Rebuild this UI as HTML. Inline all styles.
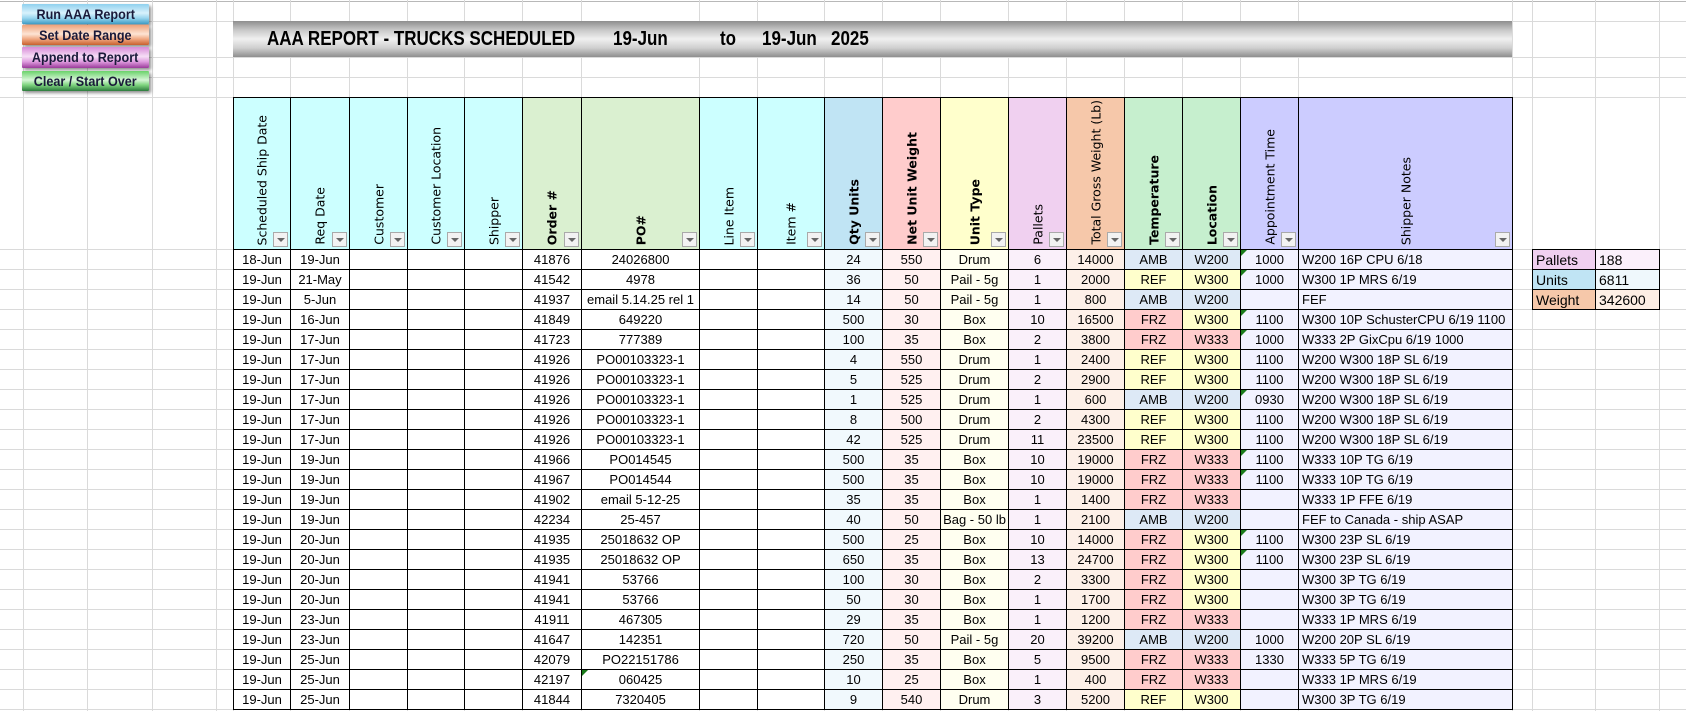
<!DOCTYPE html>
<html><head><meta charset="utf-8"><style>
*{box-sizing:border-box;margin:0;padding:0}
body{width:1686px;height:711px;overflow:hidden;background:#fff;position:relative;font-family:"Liberation Sans",Calibri,sans-serif}
.vl{position:absolute;top:0;width:1px;height:711px;background:#dadada}
.hl{position:absolute;left:0;height:1px;width:1686px;background:#dadada}
.rows{position:absolute;left:0;top:249px;width:1686px;height:462px;background:repeating-linear-gradient(to bottom,#dadada 0,#dadada 1px,transparent 1px,transparent 20px)}
.btn{position:absolute;left:22px;width:127px;font-weight:bold;font-size:14px;color:#1a1a3a;text-align:center;box-shadow:2px 2px 3px rgba(0,0,0,.45);border-radius:1px;overflow:hidden}
.btn b{display:inline-block;transform:scaleX(.9);white-space:nowrap}
.banner{position:absolute;left:233px;top:21px;width:1279px;height:36px;background:linear-gradient(#8e8e8e,#c8c8c8 25%,#f0f0f0 50%,#cfcfcf 75%,#8e8e8e)}
.banner span{position:absolute;top:7px;font-weight:bold;font-size:20px;color:#000;white-space:nowrap;transform:scaleX(.85);transform-origin:left center}
table.m{position:absolute;left:233px;top:97px;width:1279px;border-collapse:collapse;table-layout:fixed;font-size:13px}
td,th{border:1px solid #000;height:20px;text-align:center;white-space:nowrap;overflow:hidden;padding:0 2px;position:relative;font-weight:normal}
th{height:152px;background:#ccffff;font-family:"DejaVu Sans",sans-serif;font-size:12.5px}
th div{position:absolute;bottom:4px;left:50%;writing-mode:vertical-rl;transform:translateX(-50%) rotate(180deg);white-space:nowrap}
th.b div{font-weight:bold}
th i{position:absolute;right:2px;bottom:2px;width:15px;height:15px;border:1px solid #aaa;background:#f2f2f2}
th i:after{content:"";position:absolute;left:3px;top:5px;border-left:4px solid transparent;border-right:4px solid transparent;border-top:4px solid #666}
.gr{background:#daf0d0}.qh{background:#c0e4f4}.nh{background:#ffcccc}.uh{background:#ffffcc}.ph{background:#f0d0f0}.gh{background:#f6c8aa}.th{background:#c6efce}.ah{background:#ccccff}
.q{background:#f1f9fd}.n{background:#fff0f0}.u{background:#fffff0}.p{background:#faf0fa}.g{background:#fdf0e8}.a{background:#f2f2ff}.s{background:#f2f2ff;text-align:left;padding-left:3px}
.A{background:#dde9f6}.R{background:#ffffcc}.F{background:#ffcccc}
.t:before{content:"";position:absolute;left:0;top:0;border-top:6px solid #1a7a1a;border-right:6px solid transparent}
.sum{position:absolute;left:1532px;top:249px;width:127px;border-collapse:collapse;table-layout:fixed;font-size:14px}
.sum td{text-align:left;padding-left:3px;height:20px}
</style></head><body>
<div class="rows"></div>
<div class="hl" style="top:1px;background:#b8b8b8"></div>
<div class="hl" style="top:21px"></div><div class="hl" style="top:57px"></div><div class="hl" style="top:77px"></div><div class="hl" style="top:97px"></div>
<div class="vl" style="left:23px"></div><div class="vl" style="left:87px"></div><div class="vl" style="left:152px"></div><div class="vl" style="left:216px"></div><div class="vl" style="left:233px"></div>
<div class="vl" style="left:290px"></div><div class="vl" style="left:349px"></div><div class="vl" style="left:407px"></div><div class="vl" style="left:464px"></div><div class="vl" style="left:522px"></div><div class="vl" style="left:581px"></div><div class="vl" style="left:699px"></div><div class="vl" style="left:757px"></div><div class="vl" style="left:824px"></div><div class="vl" style="left:882px"></div><div class="vl" style="left:940px"></div><div class="vl" style="left:1008px"></div><div class="vl" style="left:1066px"></div><div class="vl" style="left:1124px"></div><div class="vl" style="left:1182px"></div><div class="vl" style="left:1240px"></div><div class="vl" style="left:1298px"></div>
<div class="vl" style="left:1512px"></div><div class="vl" style="left:1532px"></div><div class="vl" style="left:1595px"></div><div class="vl" style="left:1659px"></div>

<div class="btn" style="top:4px;height:20px;line-height:20px;background:linear-gradient(#8fd0ee,#d8f2fc 45%,#9ad6ef 70%,#3f9cc4)"><b>Run AAA Report</b></div>
<div class="btn" style="top:25px;height:20px;line-height:20px;background:linear-gradient(#eea27a,#fde4d4 45%,#f0a882 70%,#c8602e)"><b>Set Date Range</b></div>
<div class="btn" style="top:47px;height:21px;line-height:21px;background:linear-gradient(#d88ad8,#f6def6 45%,#df9cdf 70%,#9a3a9a)"><b>Append to Report</b></div>
<div class="btn" style="top:71px;height:20px;line-height:20px;background:linear-gradient(#6ad26a,#d6f6d6 45%,#7ed47e 70%,#2c7a3c)"><b>Clear / Start Over</b></div>

<div class="banner">
<span style="left:34px">AAA REPORT - TRUCKS SCHEDULED</span>
<span style="left:380px">19-Jun</span>
<span style="left:487px">to</span>
<span style="left:529px">19-Jun</span>
<span style="left:598px">2025</span>
</div>

<table class="m">
<colgroup><col style="width:57px"><col style="width:59px"><col style="width:58px"><col style="width:57px"><col style="width:58px"><col style="width:59px"><col style="width:118px"><col style="width:58px"><col style="width:67px"><col style="width:58px"><col style="width:58px"><col style="width:68px"><col style="width:58px"><col style="width:58px"><col style="width:58px"><col style="width:58px"><col style="width:58px"><col style="width:214px"></colgroup>
<tr>
<th><div>Scheduled Ship Date</div><i></i></th>
<th><div>Req Date</div><i></i></th>
<th><div>Customer</div><i></i></th>
<th><div>Customer Location</div><i></i></th>
<th><div>Shipper</div><i></i></th>
<th class="b gr"><div>Order #</div><i></i></th>
<th class="b gr"><div>PO#</div><i></i></th>
<th><div>Line Item</div><i></i></th>
<th><div>Item #</div><i></i></th>
<th class="b qh"><div>Qty Units</div><i></i></th>
<th class="b nh"><div>Net Unit Weight</div><i></i></th>
<th class="b uh"><div>Unit Type</div><i></i></th>
<th class="ph"><div>Pallets</div><i></i></th>
<th class="gh"><div>Total Gross Weight (Lb)</div><i></i></th>
<th class="b th"><div>Temperature</div><i></i></th>
<th class="b th"><div>Location</div><i></i></th>
<th class="ah"><div>Appointment Time</div><i></i></th>
<th class="ah"><div>Shipper Notes</div><i></i></th>
</tr>
<tr><td>18-Jun</td><td>19-Jun</td><td></td><td></td><td></td><td>41876</td><td>24026800</td><td></td><td></td><td class="q">24</td><td class="n">550</td><td class="u">Drum</td><td class="p">6</td><td class="g">14000</td><td class="A">AMB</td><td class="A">W200</td><td class="a t">1000</td><td class="s">W200 16P CPU 6/18</td></tr>
<tr><td>19-Jun</td><td>21-May</td><td></td><td></td><td></td><td>41542</td><td>4978</td><td></td><td></td><td class="q">36</td><td class="n">50</td><td class="u">Pail - 5g</td><td class="p">1</td><td class="g">2000</td><td class="R">REF</td><td class="R">W300</td><td class="a t">1000</td><td class="s">W300 1P MRS 6/19</td></tr>
<tr><td>19-Jun</td><td>5-Jun</td><td></td><td></td><td></td><td>41937</td><td>email 5.14.25 rel 1</td><td></td><td></td><td class="q">14</td><td class="n">50</td><td class="u">Pail - 5g</td><td class="p">1</td><td class="g">800</td><td class="A">AMB</td><td class="A">W200</td><td class="a"></td><td class="s">FEF</td></tr>
<tr><td>19-Jun</td><td>16-Jun</td><td></td><td></td><td></td><td>41849</td><td>649220</td><td></td><td></td><td class="q">500</td><td class="n">30</td><td class="u">Box</td><td class="p">10</td><td class="g">16500</td><td class="F">FRZ</td><td class="R">W300</td><td class="a t">1100</td><td class="s">W300 10P SchusterCPU 6/19 1100</td></tr>
<tr><td>19-Jun</td><td>17-Jun</td><td></td><td></td><td></td><td>41723</td><td>777389</td><td></td><td></td><td class="q">100</td><td class="n">35</td><td class="u">Box</td><td class="p">2</td><td class="g">3800</td><td class="F">FRZ</td><td class="F">W333</td><td class="a t">1000</td><td class="s">W333 2P GixCpu 6/19 1000</td></tr>
<tr><td>19-Jun</td><td>17-Jun</td><td></td><td></td><td></td><td>41926</td><td>PO00103323-1</td><td></td><td></td><td class="q">4</td><td class="n">550</td><td class="u">Drum</td><td class="p">1</td><td class="g">2400</td><td class="R">REF</td><td class="R">W300</td><td class="a">1100</td><td class="s">W200 W300 18P SL 6/19</td></tr>
<tr><td>19-Jun</td><td>17-Jun</td><td></td><td></td><td></td><td>41926</td><td>PO00103323-1</td><td></td><td></td><td class="q">5</td><td class="n">525</td><td class="u">Drum</td><td class="p">2</td><td class="g">2900</td><td class="R">REF</td><td class="R">W300</td><td class="a">1100</td><td class="s">W200 W300 18P SL 6/19</td></tr>
<tr><td>19-Jun</td><td>17-Jun</td><td></td><td></td><td></td><td>41926</td><td>PO00103323-1</td><td></td><td></td><td class="q">1</td><td class="n">525</td><td class="u">Drum</td><td class="p">1</td><td class="g">600</td><td class="A">AMB</td><td class="A">W200</td><td class="a t">0930</td><td class="s">W200 W300 18P SL 6/19</td></tr>
<tr><td>19-Jun</td><td>17-Jun</td><td></td><td></td><td></td><td>41926</td><td>PO00103323-1</td><td></td><td></td><td class="q">8</td><td class="n">500</td><td class="u">Drum</td><td class="p">2</td><td class="g">4300</td><td class="R">REF</td><td class="R">W300</td><td class="a">1100</td><td class="s">W200 W300 18P SL 6/19</td></tr>
<tr><td>19-Jun</td><td>17-Jun</td><td></td><td></td><td></td><td>41926</td><td>PO00103323-1</td><td></td><td></td><td class="q">42</td><td class="n">525</td><td class="u">Drum</td><td class="p">11</td><td class="g">23500</td><td class="R">REF</td><td class="R">W300</td><td class="a">1100</td><td class="s">W200 W300 18P SL 6/19</td></tr>
<tr><td>19-Jun</td><td>19-Jun</td><td></td><td></td><td></td><td>41966</td><td>PO014545</td><td></td><td></td><td class="q">500</td><td class="n">35</td><td class="u">Box</td><td class="p">10</td><td class="g">19000</td><td class="F">FRZ</td><td class="F">W333</td><td class="a t">1100</td><td class="s">W333 10P TG 6/19</td></tr>
<tr><td>19-Jun</td><td>19-Jun</td><td></td><td></td><td></td><td>41967</td><td>PO014544</td><td></td><td></td><td class="q">500</td><td class="n">35</td><td class="u">Box</td><td class="p">10</td><td class="g">19000</td><td class="F">FRZ</td><td class="F">W333</td><td class="a t">1100</td><td class="s">W333 10P TG 6/19</td></tr>
<tr><td>19-Jun</td><td>19-Jun</td><td></td><td></td><td></td><td>41902</td><td>email 5-12-25</td><td></td><td></td><td class="q">35</td><td class="n">35</td><td class="u">Box</td><td class="p">1</td><td class="g">1400</td><td class="F">FRZ</td><td class="F">W333</td><td class="a"></td><td class="s">W333 1P FFE 6/19</td></tr>
<tr><td>19-Jun</td><td>19-Jun</td><td></td><td></td><td></td><td>42234</td><td>25-457</td><td></td><td></td><td class="q">40</td><td class="n">50</td><td class="u">Bag - 50 lb</td><td class="p">1</td><td class="g">2100</td><td class="A">AMB</td><td class="A">W200</td><td class="a"></td><td class="s">FEF to Canada - ship ASAP</td></tr>
<tr><td>19-Jun</td><td>20-Jun</td><td></td><td></td><td></td><td>41935</td><td>25018632 OP</td><td></td><td></td><td class="q">500</td><td class="n">25</td><td class="u">Box</td><td class="p">10</td><td class="g">14000</td><td class="F">FRZ</td><td class="R">W300</td><td class="a t">1100</td><td class="s">W300 23P SL 6/19</td></tr>
<tr><td>19-Jun</td><td>20-Jun</td><td></td><td></td><td></td><td>41935</td><td>25018632 OP</td><td></td><td></td><td class="q">650</td><td class="n">35</td><td class="u">Box</td><td class="p">13</td><td class="g">24700</td><td class="F">FRZ</td><td class="R">W300</td><td class="a t">1100</td><td class="s">W300 23P SL 6/19</td></tr>
<tr><td>19-Jun</td><td>20-Jun</td><td></td><td></td><td></td><td>41941</td><td>53766</td><td></td><td></td><td class="q">100</td><td class="n">30</td><td class="u">Box</td><td class="p">2</td><td class="g">3300</td><td class="F">FRZ</td><td class="R">W300</td><td class="a"></td><td class="s">W300 3P TG 6/19</td></tr>
<tr><td>19-Jun</td><td>20-Jun</td><td></td><td></td><td></td><td>41941</td><td>53766</td><td></td><td></td><td class="q">50</td><td class="n">30</td><td class="u">Box</td><td class="p">1</td><td class="g">1700</td><td class="F">FRZ</td><td class="R">W300</td><td class="a"></td><td class="s">W300 3P TG 6/19</td></tr>
<tr><td>19-Jun</td><td>23-Jun</td><td></td><td></td><td></td><td>41911</td><td>467305</td><td></td><td></td><td class="q">29</td><td class="n">35</td><td class="u">Box</td><td class="p">1</td><td class="g">1200</td><td class="F">FRZ</td><td class="F">W333</td><td class="a"></td><td class="s">W333 1P MRS 6/19</td></tr>
<tr><td>19-Jun</td><td>23-Jun</td><td></td><td></td><td></td><td>41647</td><td>142351</td><td></td><td></td><td class="q">720</td><td class="n">50</td><td class="u">Pail - 5g</td><td class="p">20</td><td class="g">39200</td><td class="A">AMB</td><td class="A">W200</td><td class="a">1000</td><td class="s">W200 20P SL 6/19</td></tr>
<tr><td>19-Jun</td><td>25-Jun</td><td></td><td></td><td></td><td>42079</td><td>PO22151786</td><td></td><td></td><td class="q">250</td><td class="n">35</td><td class="u">Box</td><td class="p">5</td><td class="g">9500</td><td class="F">FRZ</td><td class="F">W333</td><td class="a">1330</td><td class="s">W333 5P TG 6/19</td></tr>
<tr><td>19-Jun</td><td>25-Jun</td><td></td><td></td><td></td><td>42197</td><td class="t">060425</td><td></td><td></td><td class="q">10</td><td class="n">25</td><td class="u">Box</td><td class="p">1</td><td class="g">400</td><td class="F">FRZ</td><td class="F">W333</td><td class="a"></td><td class="s">W333 1P MRS 6/19</td></tr>
<tr><td>19-Jun</td><td>25-Jun</td><td></td><td></td><td></td><td>41844</td><td>7320405</td><td></td><td></td><td class="q">9</td><td class="n">540</td><td class="u">Drum</td><td class="p">3</td><td class="g">5200</td><td class="R">REF</td><td class="R">W300</td><td class="a"></td><td class="s">W300 3P TG 6/19</td></tr>
</table>

<table class="sum">
<colgroup><col style="width:63px"><col style="width:64px"></colgroup>
<tr><td style="background:#f0d0f0">Pallets</td><td style="background:#fbf0fb">188</td></tr>
<tr><td style="background:#c0e4f4">Units</td><td style="background:#eff8fc">6811</td></tr>
<tr><td style="background:#f6c8aa">Weight</td><td style="background:#fdeee4">342600</td></tr>
</table>
</body></html>
